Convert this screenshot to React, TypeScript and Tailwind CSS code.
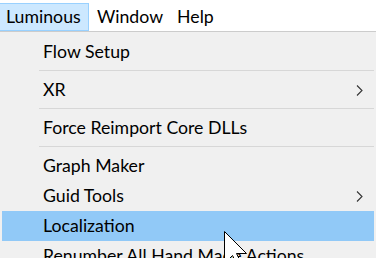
import React from "react";

const Chevron = () => (
  <svg width="7" height="11" viewBox="0 0 7 11" className="shrink-0">
    <path d="M1 0.5 L6 5.5 L1 10.5" fill="none" stroke="#333333" strokeWidth="1.1" />
  </svg>
);

const Item = ({ label, sub, active }: { label: string; sub?: boolean; active?: boolean }) => (
  <div
    className={`mx-[2px] h-[30px] flex items-center pl-[41px] pr-[11px] ${active ? "bg-[#91c9f7]" : ""}`}
  >
    <span className="flex-1 whitespace-nowrap">{label}</span>
    {sub ? <Chevron /> : null}
  </div>
);

const Sep = () => (
  <div className="h-[8px] pt-[3px]">
    <div className="ml-[39px] mr-[2px] h-px bg-[#d7d7d7]" />
  </div>
);

export default function App() {
  return (
    <div
      className="relative w-[376px] h-[258px] overflow-hidden bg-white text-[17.7px] text-black leading-none"
      style={{ fontFamily: 'Lato, "Noto Sans", sans-serif' }}
    >
      <div className="h-[31px] flex items-start pt-[3px]">
        <div className="h-[28px] w-[89px] bg-[#cce8ff] border border-[#99d1ff] border-l-0 flex items-center pl-[6px]">
          Luminous
        </div>
        <div className="h-[28px] flex items-center pl-[8px]">Window</div>
        <div className="h-[28px] flex items-center pl-[14px]">Help</div>
      </div>
      <div className="border-t border-[#cccccc] bg-[#f0f0f0] pt-[5px] h-[227px]">
        <Item label="Flow Setup" />
        <Sep />
        <Item label="XR" sub />
        <Sep />
        <Item label="Force Reimport Core DLLs" />
        <Sep />
        <Item label="Graph Maker" />
        <Item label="Guid Tools" sub />
        <Item label="Localization" active />
        <Item label="Renumber All Hand Made Actions" />
      </div>
      <svg
        className="absolute left-[224px] top-[231px]"
        width="26"
        height="40"
        viewBox="0 0 26 40"
      >
        <path
          d="M0.5 0.5 L0.5 32.5 L8.5 24.5 L14.5 36.5 L18.5 34.5 L12.5 22.5 L22.5 22.5 Z"
          fill="#ffffff"
          stroke="#000000"
          strokeWidth="1"
        />
      </svg>
    </div>
  );
}
